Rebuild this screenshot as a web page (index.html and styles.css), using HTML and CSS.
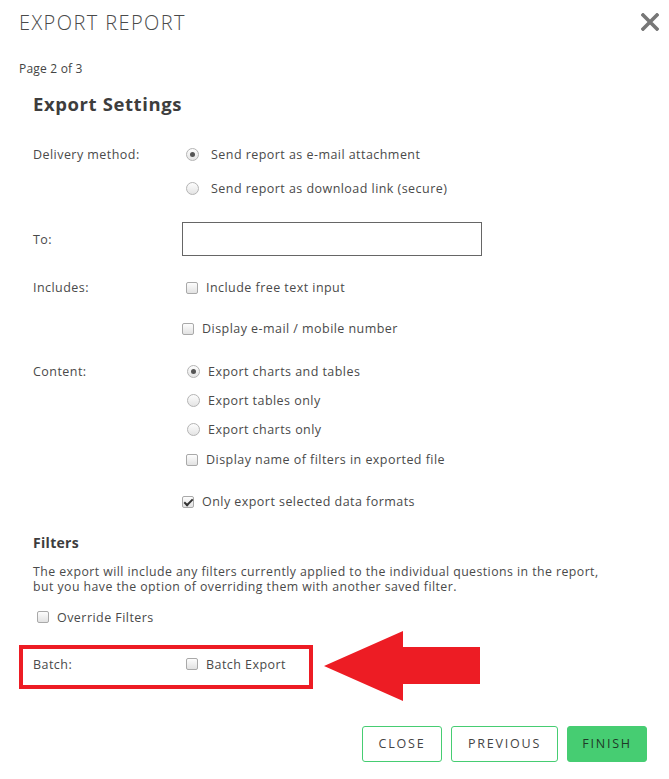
FILE: index.html
```html
<!DOCTYPE html>
<html lang="en">
<head>
  <meta charset="UTF-8">
  <title>Export Report</title>
  <link rel="stylesheet" href="styles.css">
</head>
<body>
  <div class="modal">
    <div class="modal-header">
      <h1>EXPORT REPORT</h1>
      <svg class="close-x" width="18" height="18" viewBox="0 0 18 18">
        <path d="M2 2 L16 16 M16 2 L2 16" stroke="#777" stroke-width="3.6" stroke-linecap="square"/>
      </svg>
    </div>
    <p class="page-info">Page 2 of 3</p>

    <h2>Export Settings</h2>

    <div class="row row-delivery">
      <span class="label">Delivery method:</span>
      <div class="options">
        <label class="opt in4"><span class="radio checked"></span><span class="t12">Send report as e-mail attachment</span></label>
        <label class="opt in4 gap5"><span class="radio"></span><span class="t12">Send report as download link (secure)</span></label>
      </div>
    </div>

    <div class="row row-to">
      <span class="label">To:</span>
      <input type="text" class="to-input">
    </div>

    <div class="row row-includes">
      <span class="label">Includes:</span>
      <div class="options">
        <label class="opt in4"><span class="check"></span><span>Include free text input</span></label>
        <label class="opt gap12"><span class="check"></span><span>Display e-mail / mobile number</span></label>
      </div>
    </div>

    <div class="row row-content">
      <span class="label">Content:</span>
      <div class="options">
        <label class="opt in5"><span class="radio checked"></span><span>Export charts and tables</span></label>
        <label class="opt in5"><span class="radio"></span><span>Export tables only</span></label>
        <label class="opt in5"><span class="radio"></span><span>Export charts only</span></label>
        <label class="opt in4 gap1"><span class="check"></span><span>Display name of filters in exported file</span></label>
        <label class="opt gap13"><span class="check checked"></span><span>Only export selected data formats</span></label>
      </div>
    </div>

    <h3>Filters</h3>
    <p class="filters-text">The export will include any filters currently applied to the individual questions in the report, but you have the option of overriding them with another saved filter.</p>
    <label class="opt override"><span class="check"></span><span>Override Filters</span></label>

    <div class="batch-wrap">
      <div class="batch-box">
        <span class="label">Batch:</span>
        <label class="opt in4"><span class="check"></span><span>Batch Export</span></label>
      </div>
      <svg class="arrow" width="160" height="72" viewBox="0 0 160 72">
        <polygon points="1,35 80,0 80,16 157,16 157,53 80,53 80,70" fill="#ed1c24"/>
      </svg>
    </div>

    <div class="actions">
      <button class="btn">CLOSE</button>
      <button class="btn btn-prev">PREVIOUS</button>
      <button class="btn btn-finish">FINISH</button>
    </div>
  </div>
</body>
</html>
```

FILE: styles.css
```css
* {
  box-sizing: border-box;
}

body {
  margin: 0;
  background: #fff;
  font-family: "Open Sans", "Liberation Sans", sans-serif;
  color: #4a4a4a;
  font-size: 12.5px;
  letter-spacing: 0.45px;
}

.modal {
  width: 669px;
  height: 779px;
  padding: 0 22px 0 19px;
}

.modal-header {
  display: flex;
  justify-content: space-between;
  align-items: center;
  height: 44px;
}

.modal-header h1 {
  margin: 0;
  font-size: 20px;
  font-weight: 300;
  letter-spacing: 1.4px;
  color: #4a4a4a;
}

.close-x {
  margin-right: -12px;
}

.page-info {
  margin: 16px 0 0;
  font-size: 12px;
  line-height: 18px;
  color: #444;
  letter-spacing: 0.2px;
}

h2 {
  margin: 14px 0 0 14px;
  font-size: 18.5px;
  font-weight: 700;
  line-height: 24px;
  letter-spacing: 0.6px;
  color: #3d3d3d;
}

.row {
  display: flex;
  padding-left: 14px;
}

.label {
  width: 149px;
  flex: none;
  line-height: 29px;
  font-size: 12.5px;
}

.options {
  display: flex;
  flex-direction: column;
}

.opt {
  display: flex;
  align-items: center;
  height: 29px;
  font-size: 12.5px;
}

.in4 { margin-left: 4px; }
.in5 { margin-left: 5px; }
.gap1 { margin-top: 1px; }
.gap5 { margin-top: 5px; }
.gap12 { margin-top: 12px; }
.gap13 { margin-top: 13px; }

.radio {
  width: 13px;
  height: 13px;
  border-radius: 50%;
  border: 1px solid #b4b4b4;
  background: linear-gradient(#fdfdfd, #e4e4e4);
  margin-right: 8px;
  display: flex;
  align-items: center;
  justify-content: center;
  flex: none;
}

.opt .t12 {
  margin-left: 4px;
}

.radio.checked::after {
  content: "";
  width: 5px;
  height: 5px;
  border-radius: 50%;
  background: #555;
}

.check {
  width: 12px;
  height: 12px;
  border: 1px solid #a9a9a9;
  border-radius: 2px;
  background: linear-gradient(#fdfdfd, #e2e2e2);
  margin-right: 8px;
  flex: none;
  position: relative;
}

.check.checked::after {
  content: "";
  position: absolute;
  left: 3px;
  top: 0;
  width: 3px;
  height: 7px;
  border: solid #333;
  border-width: 0 2px 2px 0;
  transform: rotate(45deg);
}

.row-delivery {
  margin-top: 24px;
}

.row-to {
  margin-top: 19px;
  align-items: center;
}

.to-input {
  width: 300px;
  height: 34px;
  border: 1px solid #666;
  margin: 0;
  padding: 0 8px;
  font: inherit;
}

.row-includes {
  margin-top: 17px;
}

.row-content {
  margin-top: 14px;
}

h3 {
  margin: 17px 0 0 14px;
  font-size: 14px;
  font-weight: 700;
  line-height: 20px;
  letter-spacing: 0.3px;
  color: #3d3d3d;
}

.filters-text {
  margin: 12px 0 0 14px;
  width: 590px;
  font-size: 12.3px;
  line-height: 14.5px;
}

.override {
  margin: 8.5px 0 0 18px;
}

.batch-wrap {
  position: relative;
  margin-top: 13px;
}

.batch-box {
  width: 294px;
  height: 44px;
  border: 4px solid #ed1c24;
  display: flex;
  align-items: flex-start;
  padding: 0 0 0 10px;
}

.batch-box .label {
  width: 149px;
  line-height: 31px;
}

.batch-box .opt {
  height: 31px;
}

.arrow {
  position: absolute;
  left: 304px;
  top: -14px;
}

.actions {
  display: flex;
  justify-content: flex-end;
  gap: 9px;
  margin-top: 37px;
}

.btn {
  height: 36px;
  width: 80px;
  border: 1px solid #46cd72;
  border-radius: 3px;
  background: #fff;
  color: #444;
  font-family: "Open Sans", "Liberation Sans", sans-serif;
  font-size: 12.5px;
  letter-spacing: 1.8px;
  cursor: pointer;
}

.btn-prev {
  width: 107px;
}

.btn-finish {
  background: #46cd72;
  color: #1f3a28;
}
```
